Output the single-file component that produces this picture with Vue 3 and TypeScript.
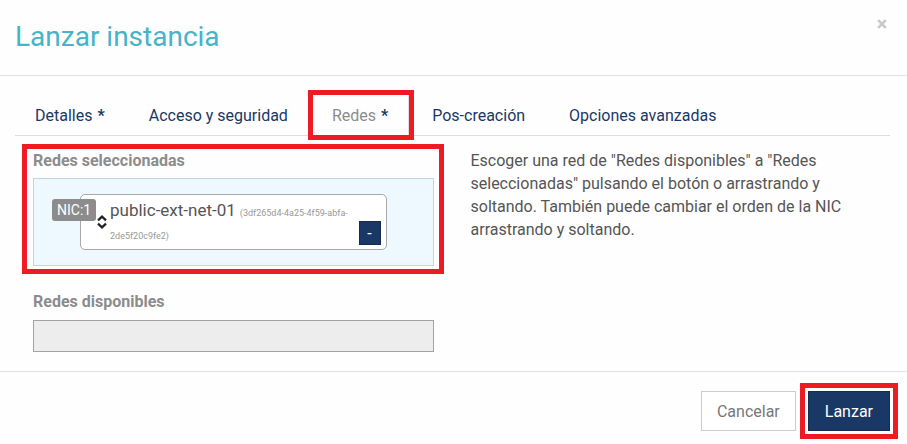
<script setup lang="ts">
import { ref } from 'vue'

interface Tab {
  id: string
  label: string
  required?: boolean
}

interface Network {
  id: string
  name: string
}

const tabs: Tab[] = [
  { id: 'details', label: 'Detalles', required: true },
  { id: 'access', label: 'Acceso y seguridad' },
  { id: 'networks', label: 'Redes', required: true },
  { id: 'post', label: 'Pos-creación' },
  { id: 'advanced', label: 'Opciones avanzadas' },
]

const active = ref('networks')

const selected = ref<Network[]>([
  { id: '3df265d4-4a25-4f59-abfa-2de5f20c9fe2', name: 'public-ext-net-01' },
])
const available = ref<Network[]>([])

function deselect(index: number) {
  available.value.push(...selected.value.splice(index, 1))
}
</script>

<template>
  <form class="modal" @submit.prevent>
    <header class="modal-header">
      <h1>Lanzar instancia</h1>
      <button type="button" class="close" aria-label="Cerrar">
        <svg viewBox="0 0 10 10" width="10" height="10" aria-hidden="true">
          <path d="M1.2 1.2 8.8 8.8M8.8 1.2 1.2 8.8" fill="none" stroke="#c8c8c8" stroke-width="2.6" />
        </svg>
      </button>
    </header>

    <div class="modal-body">
      <nav class="tabs">
        <a
          v-for="tab in tabs"
          :key="tab.id"
          :href="'#' + tab.id"
          class="tab"
          :class="{ active: tab.id === active, marked: tab.id === 'networks' }"
          @click.prevent="active = tab.id"
        >{{ tab.label }}<span v-if="tab.required" class="star"> *</span></a>
      </nav>

      <div class="columns">
        <div class="column">
          <section class="selected marked">
            <h2>Redes seleccionadas</h2>
            <ul class="panel">
              <li v-for="(net, i) in selected" :key="net.id" class="network">
                <span class="nic">NIC:{{ i + 1 }}</span>
                <svg class="sort" viewBox="0 0 10 14" width="10" height="14" aria-hidden="true">
                  <path d="M1 5.4 5 1.6 9 5.4M1 8.6 5 12.4 9 8.6" fill="none" stroke="#222" stroke-width="2.2" />
                </svg>
                <div class="network-text">
                  <span class="network-name">{{ net.name }}</span>
                  <small>({{ net.id }})</small>
                </div>
                <button type="button" class="remove" @click="deselect(i)">-</button>
              </li>
            </ul>
          </section>
          <section class="available">
            <h2>Redes disponibles</h2>
            <ul class="panel empty">
              <li v-for="net in available" :key="net.id">{{ net.name }}</li>
            </ul>
          </section>
        </div>
        <p class="column help">
          Escoger una red de "Redes disponibles" a "Redes seleccionadas" pulsando el botón o arrastrando y
          soltando. También puede cambiar el orden de la NIC arrastrando y soltando.
        </p>
      </div>
    </div>

    <footer class="modal-footer">
      <button type="button" class="btn">Cancelar</button>
      <button type="submit" class="btn primary marked">Lanzar</button>
    </footer>
  </form>
</template>

<style>
body {
  background: #fefefe;
}
</style>

<style scoped>
.modal,
.modal button {
  font-family: Roboto, "Liberation Sans", sans-serif;
  font-size: 16px;
  line-height: 23px;
}

.modal {
  color: #555;
}

.modal * {
  box-sizing: border-box;
}

.modal-header {
  display: flex;
  align-items: flex-start;
  justify-content: space-between;
  padding: 17px 20px 18px 15px;
  border-bottom: 1px solid #e3e3e3;
}

h1 {
  margin: 0;
  color: #46b3c8;
  font-size: 28px;
  font-weight: 400;
  line-height: 40px;
}

.close {
  display: flex;
  padding: 2px 0;
  border: 0;
  background: none;
}

.modal-body {
  padding: 19px 17px 19px 15px;
}

.tabs {
  display: flex;
  gap: 4px;
  padding-left: 1px;
  border-bottom: 1px solid #ddd;
}

.tab {
  padding: 10px 20px 8px 18px;
  border-right: 1px solid transparent;
  border-left: 1px solid transparent;
  color: #1a3865;
  line-height: 22px;
  text-decoration: none;
  white-space: pre;
}

.tab.active {
  border-right-color: #ddd;
  color: #8c8c8c;
}

.star {
  margin-left: 1px;
  color: #1a3865;
  font-weight: 700;
}

.marked {
  outline: 5px solid #ed1c24;
}

.columns {
  display: grid;
  grid-template-columns: 1fr 1fr;
}

.column {
  padding: 0 19px 0 18px;
}

.selected {
  margin: 13px -5px 0 -6px;
  padding: 0 5px 3px 6px;
}

h2 {
  margin: 0;
  color: #8c8c8c;
  font-size: 16px;
  font-weight: 700;
  line-height: 23px;
}

.panel {
  margin: 6px 0 0;
  padding: 15px 46px;
  border: 1px solid #bcd8e3;
  background: #edf8ff;
  list-style: none;
}

.network {
  position: relative;
  display: flex;
  padding: 4px 5px 4px 29px;
  border: 1px solid #a8a8a8;
  border-radius: 5px;
  background: #fff;
}

.nic {
  position: absolute;
  top: 4px;
  left: -29px;
  padding: 0 5px;
  border-radius: 3px;
  background: #8c8c8c;
  color: #fff;
  font-size: 14px;
  line-height: 22px;
}

.sort {
  position: absolute;
  top: 20px;
  left: 16px;
}

.network-text {
  flex: 1;
  margin-right: -22px;
  padding-right: 24px;
}

.network-name {
  margin-right: 4px;
  font-size: 17px;
}

small {
  color: #999;
  font-size: 9px;
  line-height: 12px;
}

.remove {
  flex: none;
  align-self: flex-end;
  width: 22px;
  height: 24px;
  padding: 0;
  border: 1px solid #142c50;
  background: #1a3865;
  color: #fff;
}

.available {
  margin-top: 21px;
}

.panel.empty {
  min-height: 32px;
  margin-top: 7px;
  padding: 4px 12px;
  border-color: #a3a3a3;
  background: #ededed;
}

.help {
  margin: 13px 0 0;
}

.modal-footer {
  display: flex;
  justify-content: flex-end;
  gap: 12px;
  padding: 19px 17px 13px;
  border-top: 1px solid #e3e3e3;
}

.modal .btn {
  height: 40px;
  padding: 0 15px;
  border: 1px solid #ccc;
  background: #fff;
  color: #777;
}

.modal .primary {
  padding: 0 16px;
  border-color: #142c50;
  background: #1a3865;
  color: #fff;
  outline-offset: 3px;
}
</style>
